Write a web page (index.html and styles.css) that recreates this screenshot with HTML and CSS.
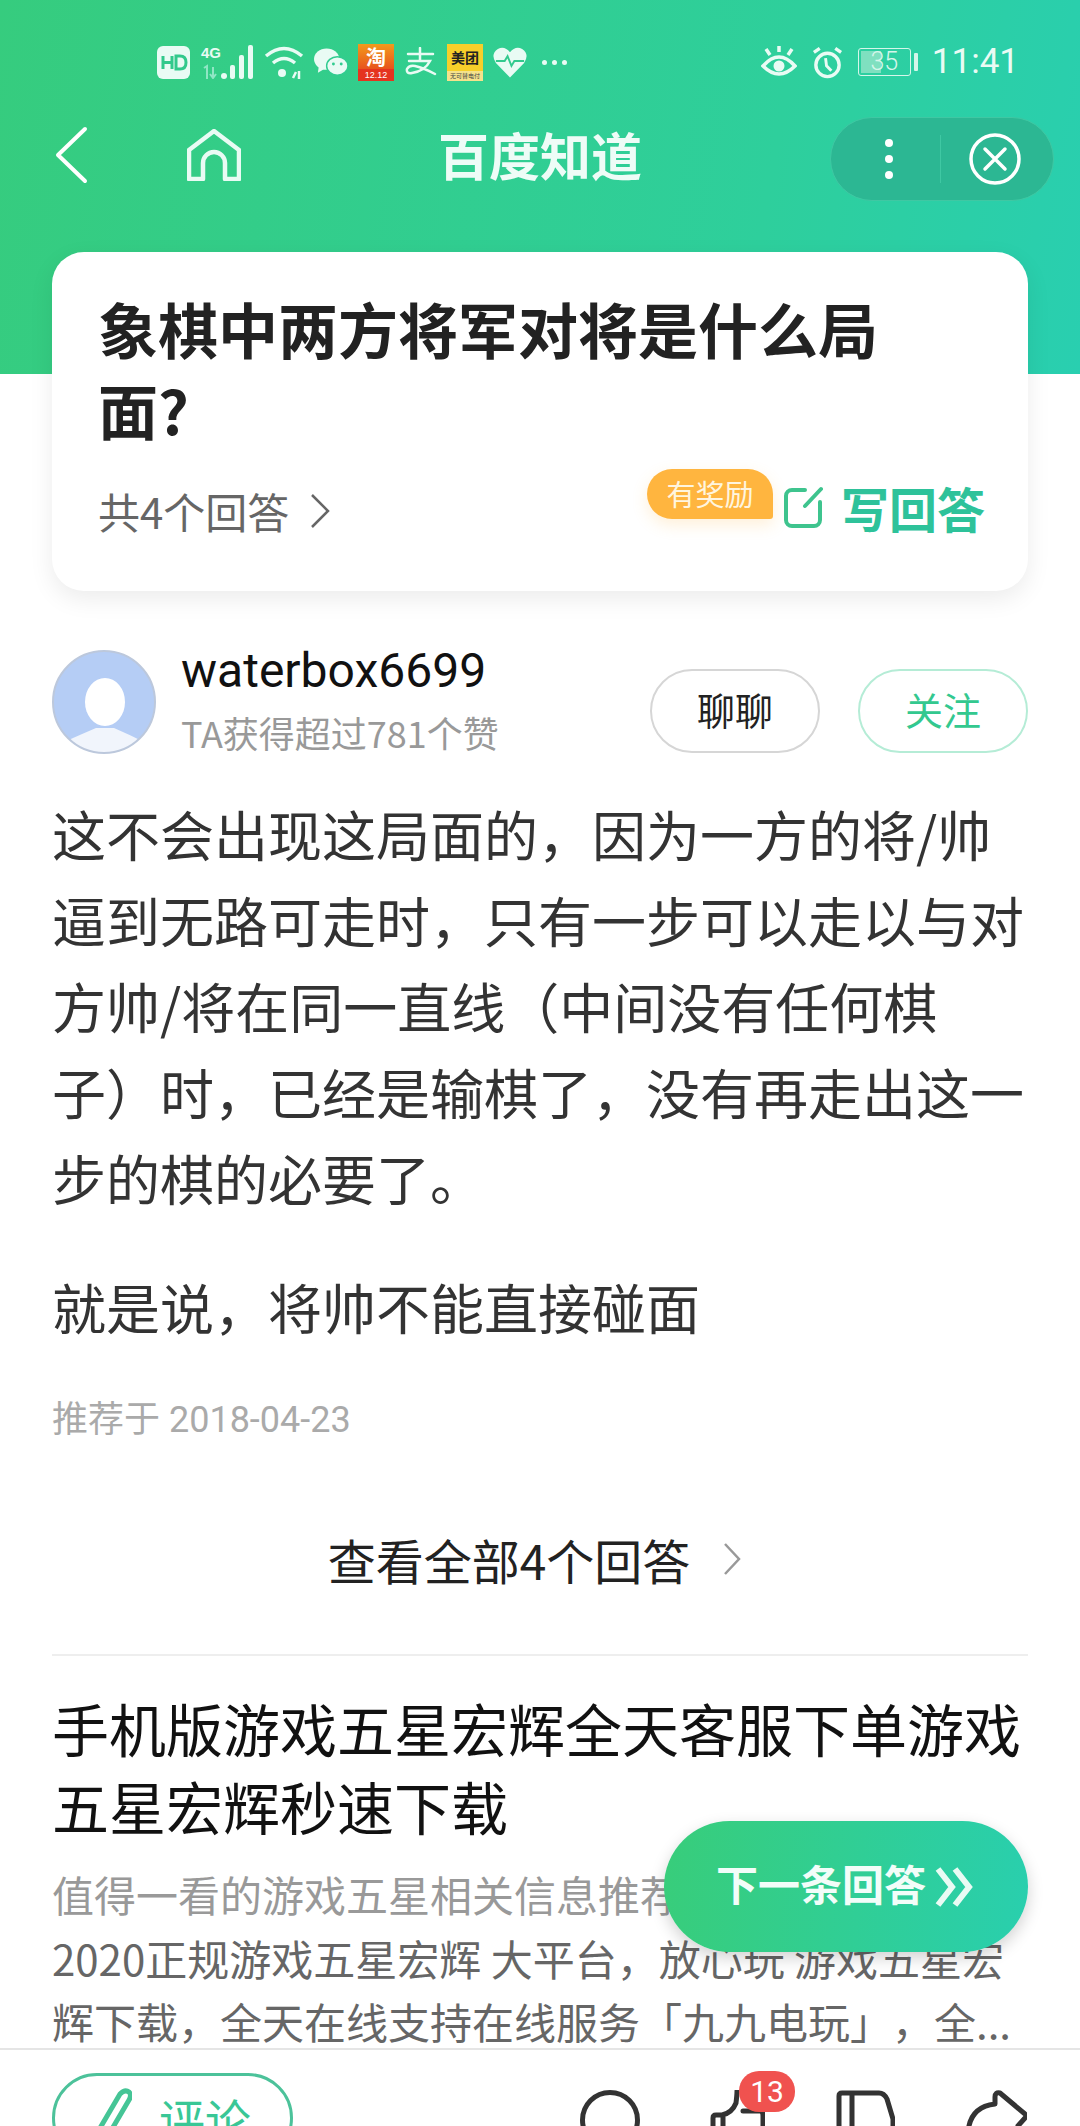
FILE: index.html
```html
<!DOCTYPE html>
<html lang="zh-CN">
<head>
    <meta charset="UTF-8">
    <meta name="viewport" content="width=device-width, initial-scale=1.0">
    <title>百度知道</title>
    <link rel="stylesheet" href="styles.css">
</head>
<body>
    <div class="page">
        <header class="top">
            <div class="status">
                <div class="status-left">
                    <svg class="st" width="33" height="33" viewBox="0 0 33 33"><rect width="33" height="33" rx="6" fill="#e9fbf4"/><path d="M6 10v13M15 10v13M6 16.500h9" stroke="#32c98c" stroke-width="3" fill="none"/><path d="M19 10h4q6 0 6 6.500t-6 6.500h-4z" stroke="#32c98c" stroke-width="3" fill="none"/></svg>
                    <div class="net">
                        <span class="net-4g">4G</span>
                        <svg class="net-bars" width="53" height="34" viewBox="0 0 53 34" fill="#e9fbf4"><path d="M3 23l3-2v13M12 22v10M9 29l3 4 3-4" fill="none" stroke="#8fe6c4" stroke-width="2"/><circle cx="23" cy="31" r="3"/><rect x="29" y="20" width="5" height="14" rx="2"/><rect x="38" y="10" width="5" height="24" rx="2"/><rect x="47" y="0" width="5" height="34" rx="2"/></svg>
                    </div>
                    <svg class="st" width="40" height="34" viewBox="0 0 40 34" fill="none" stroke="#e9fbf4" stroke-width="3.500"><path d="M2 11q18-15 36 0"/><path d="M9 18q11-9 22 0"/><circle cx="18" cy="28" r="4" fill="#e9fbf4" stroke="none"/><path d="M29 33l3-6M35 26v8" stroke-width="2.500"/></svg>
                    <svg class="st" width="34" height="30" viewBox="0 0 35 30" fill="#e9fbf4"><ellipse cx="13" cy="12" rx="13" ry="11"/><path d="M5 19l-1 7 7-4z"/><ellipse cx="24" cy="19" rx="11" ry="9.500" stroke="#31cc90" stroke-width="1.500"/><circle cx="20" cy="17" r="1.500" fill="#31cc90"/><circle cx="28" cy="17" r="1.500" fill="#31cc90"/></svg>
                    <div class="taobao"><span class="taobao-top">淘</span><span class="taobao-date">12.12</span></div>
                    <svg class="st" width="33" height="30" viewBox="0 0 33 30" fill="none" stroke="#e9fbf4" stroke-width="2.500" stroke-linecap="round"><path d="M4 7h25M16 1v12M5 14h21q-5 10-18 12q-6 1-5-4q2-4 8-3q9 2 20 8"/></svg>
                    <div class="meituan"><span class="meituan-top">美团</span><span class="meituan-sub">无可替电付</span></div>
                    <svg class="st" width="34" height="32" viewBox="0 0 35 32"><path d="M17.500 32L3 17Q-3 8 5 2.500 12-1 17.500 6 23-1 30 2.500 38 8 32 17z" fill="#e9fbf4"/><path d="M3 15h9l3-5 4 10 3-5h10" stroke="#32ca8e" stroke-width="2" fill="none"/></svg>
                    <span class="more-dots"><i></i><i></i><i></i></span>
                </div>
                <div class="status-right">
                    <svg width="36" height="32" viewBox="0 0 36 32" fill="none" stroke="#e9fbf4" stroke-width="3.500"><path d="M2 20q16-18 32 0q-16 16-32 0z"/><circle cx="18" cy="20" r="5.500" fill="#e9fbf4" stroke="none"/><path d="M18 0v6M5 3l4 6M31 3l-4 6"/></svg>
                    <svg width="33" height="33" viewBox="0 0 34 33" fill="none" stroke="#e9fbf4" stroke-width="3.500"><circle cx="17" cy="19" r="12"/><path d="M15 12l1 8 5 5" stroke-width="3"/><path d="M3 6l6-4M31 6l-6-4"/></svg>
                    <div class="battery">
                        <div class="battery-body"><span class="battery-fill"></span><span class="battery-num">35</span></div>
                        <span class="battery-tip"></span>
                    </div>
                    <span class="clock">11:41</span>
                </div>
            </div>
            <nav class="nav">
                <svg class="nav-back" width="34" height="58" viewBox="0 0 34 58" fill="none" stroke="#fff" stroke-width="4" stroke-linecap="round" stroke-linejoin="round"><path d="M31 3L4 29l27 26"/></svg>
                <svg class="nav-home" width="54" height="52" viewBox="0 0 54 52" fill="none" stroke="#e9fbf4" stroke-width="4.500" stroke-linejoin="round"><path d="M2 21L27 2l25 19v29H38V34a11 11 0 0 0-22 0v16H2z"/></svg>
                <h1 class="nav-title">百度知道</h1>
                <div class="capsule">
                    <span class="capsule-dots"><i></i><i></i><i></i></span>
                    <span class="capsule-line"></span>
                    <svg width="52" height="52" viewBox="0 0 52 52" fill="none" stroke="#fff" stroke-width="3.500"><circle cx="26" cy="26" r="24"/><path d="M16 16l20 20M36 16L16 36" stroke-linecap="round"/></svg>
                </div>
            </nav>
        </header>

        <main class="content">
            <section class="question">
                <h2 class="q-title">象棋中两方将军对将是什么局面?</h2>
                <div class="q-foot">
                    <span class="q-count">共4个回答
                        <svg width="22" height="36" viewBox="0 0 22 36" fill="none" stroke="#666" stroke-width="2.500"><path d="M3 2l16 16L3 34"/></svg>
                    </span>
                    <div class="q-write">
                        <span class="reward">有奖励</span>
                        <svg width="40" height="43" viewBox="0 0 40 43" fill="none" stroke="#3ec48e" stroke-width="4" stroke-linecap="round"><path d="M22 4H9a6 6 0 0 0-6 6v24a6 6 0 0 0 6 6h22a6 6 0 0 0 6-6V16"/><path d="M38 3L22 20"/></svg>
                        <span class="write-text">写回答</span>
                    </div>
                </div>
            </section>

            <section class="author">
                <svg class="avatar" width="104" height="104" viewBox="0 0 104 104"><defs><clipPath id="ava"><circle cx="52" cy="52" r="51"/></clipPath></defs><circle cx="52" cy="52" r="51" fill="#b5cdf5"/><g clip-path="url(#ava)"><path d="M12 92Q30 84 44 78H62Q76 84 92 92V104H12z" fill="#f1f5fc"/><ellipse cx="53" cy="52" rx="20" ry="24" fill="#fff"/></g><circle cx="52" cy="52" r="51" fill="none" stroke="#bcc8dc" stroke-width="2"/></svg>
                <div class="author-info">
                    <div class="author-name">waterbox6699</div>
                    <div class="author-sub">TA获得超过781个赞</div>
                </div>
                <button class="pill chat">聊聊</button>
                <button class="pill follow">关注</button>
            </section>

            <article class="answer">
                <p>这不会出现这局面的，因为一方的将/帅逼到无路可走时，只有一步可以走以与对方帅/将在同一直线（中间没有任何棋子）时，已经是输棋了，没有再走出这一步的棋的必要了。</p>
                <p>就是说，将帅不能直接碰面</p>
            </article>
            <div class="answer-date">推荐于 2018-04-23</div>

            <div class="see-all">查看全部4个回答
                <svg width="20" height="34" viewBox="0 0 20 34" fill="none" stroke="#999" stroke-width="2.500"><path d="M3 2l14 15L3 32"/></svg>
            </div>

            <section class="rec">
                <h3 class="rec-title">手机版游戏五星宏辉全天客服下单游戏五星宏辉秒速下载</h3>
                <p class="rec-text"><span class="rec-lead">值得一看的游戏五星相关信息推荐</span><br>2020正规游戏五星宏辉 大平台，放心玩 游戏五星宏辉下载，全天在线支持在线服务「九九电玩」，全...</p>
            </section>
        </main>

        <button class="next"><span class="next-text">下一条回答</span>
            <svg width="38" height="40" viewBox="0 0 38 40" fill="none" stroke="#e9fbf4" stroke-width="6"><path d="M3 2l14 18L3 38M20 2l14 18-14 18"/></svg>
        </button>

        <footer class="bottom">
            <div class="comment">
                <svg width="42" height="60" viewBox="0 0 42 60" fill="none" stroke="#45c596" stroke-width="5" stroke-linecap="round"><path d="M3 52L30 6q5-5 9-2 3 3 0 8L12 58"/></svg>
                <span>评论</span>
            </div>
            <div class="tools">
                <svg width="60" height="64" viewBox="0 0 60 64" fill="none" stroke="#333" stroke-width="5"><circle cx="30" cy="30" r="27.500"/></svg>
                <div class="like">
                    <svg width="55" height="64" viewBox="0 0 55 64" fill="none" stroke="#333" stroke-width="5" stroke-linecap="round"><path d="M3 44V28q0-3 3-3h6q10-2 14-12 1-8 1-12M13 25v19M33 21h17q3 0 3 5v18"/></svg>
                    <span class="badge">13</span>
                </div>
                <svg width="60" height="64" viewBox="0 0 60 64" fill="none" stroke="#333" stroke-width="5"><path d="M4 44V6q0-3 3-3h37q5 0 8 6l6 20v15M17 3v33"/></svg>
                <svg width="62" height="64" viewBox="0 0 62 64" fill="none" stroke="#333" stroke-width="5" stroke-linejoin="round"><path d="M3 44Q4 17 30 14V7q0-5 5-4l25 21q2 2 0 4l-8 9"/></svg>
            </div>
        </footer>
    </div>
</body>
</html>
```

FILE: styles.css
```css
* {
    box-sizing: border-box;
}
html, body {
    margin: 0;
    padding: 0;
}
body {
    background-color: #fff;
    font-family: "Noto Sans CJK SC", Roboto, sans-serif;
    color: #222;
    text-spacing-trim: space-all;
}
.page {
    position: relative;
    width: 1080px;
    height: 2126px;
    overflow: hidden;
    display: flex;
    flex-direction: column;
}

/* green header */
.top {
    height: 374px;
    flex-shrink: 0;
    background: linear-gradient(100deg, #36cc7e 0%, #2ecf9c 70%, #29cfb0 100%);
    padding-top: 42px;
}
.status {
    height: 40px;
    display: flex;
    justify-content: space-between;
    align-items: center;
    padding: 0 61px 0 157px;
}
.status-left, .status-right {
    display: flex;
    align-items: center;
}
.status-left .st {
    flex-shrink: 0;
}
.status-left {
    gap: 10px;
}
.status-right {
    gap: 14px;
}
.net {
    position: relative;
    width: 53px;
    height: 34px;
    margin-left: 1px;
}
.net-4g {
    position: absolute;
    left: 0;
    top: 0;
    font-family: "Liberation Sans", sans-serif;
    font-size: 15px;
    font-weight: bold;
    color: #e9fbf4;
    line-height: 15px;
}
.net-bars {
    display: block;
}
.taobao {
    width: 36px;
    height: 37px;
    background: linear-gradient(180deg, #f39a1c 0%, #e7511d 70%);
    display: flex;
    flex-direction: column;
    align-items: center;
}
.taobao-top {
    font-size: 20px;
    line-height: 25px;
    height: 25px;
    font-weight: bold;
    color: #fff;
}
.taobao-date {
    width: 100%;
    height: 12px;
    background-color: #e5341f;
    color: #fff;
    font-family: "Liberation Sans", sans-serif;
    font-size: 9px;
    line-height: 12px;
    text-align: center;
}
.meituan {
    width: 36px;
    height: 37px;
    background-color: #f7cf2a;
    display: flex;
    flex-direction: column;
    align-items: center;
}
.meituan-top {
    font-size: 14px;
    line-height: 27px;
    font-weight: bold;
    color: #222;
    white-space: nowrap;
}
.meituan-sub {
    width: 100%;
    height: 10px;
    background-color: #f5e28c;
    font-size: 6px;
    line-height: 10px;
    color: #444;
    text-align: center;
    white-space: nowrap;
    overflow: hidden;
}
.more-dots {
    display: flex;
    gap: 5px;
    margin-left: 5px;
}
.more-dots i {
    width: 5px;
    height: 5px;
    border-radius: 50%;
    background-color: #e9fbf4;
}
.battery {
    display: flex;
    align-items: center;
    gap: 3px;
}
.battery-body {
    position: relative;
    width: 53px;
    height: 28px;
    border: 1.5px solid #d5f6ea;
    border-radius: 3px;
}
.battery-fill {
    position: absolute;
    left: 2px;
    top: 2px;
    bottom: 2px;
    width: 20px;
    background-color: #7fe0c0;
}
.battery-num {
    position: absolute;
    inset: 0;
    text-align: center;
    font-family: Roboto, sans-serif;
    font-size: 25px;
    font-weight: 300;
    line-height: 25px;
    color: #d5f6ea;
}
.battery-tip {
    width: 4px;
    height: 18px;
    border-radius: 1px;
    background-color: #d5f6ea;
}
.clock {
    font-family: Roboto, sans-serif;
    font-size: 35px;
    line-height: 40px;
    color: #e9fbf4;
}
.nav {
    position: relative;
    height: 88px;
    margin-top: 32px;
    display: flex;
    align-items: center;
    padding: 0 26px 0 54px;
}
.nav-back, .nav-home {
    margin-bottom: 7px;
}
.nav-home {
    margin-left: 99px;
}
.nav-title {
    position: absolute;
    left: 0;
    right: 0;
    top: 8px;
    margin: 0;
    text-align: center;
    font-size: 51px;
    line-height: 64px;
    font-weight: bold;
    color: #eefcf7;
}
.capsule {
    position: relative;
    margin-left: auto;
    margin-top: 2px;
    width: 224px;
    height: 84px;
    border-radius: 42px;
    background-color: #2cb793;
    border: 1px solid #3fc8a3;
    display: flex;
    align-items: center;
    padding-left: 54px;
}
.capsule-dots {
    display: flex;
    flex-direction: column;
    gap: 8px;
}
.capsule-dots i {
    width: 8px;
    height: 8px;
    border-radius: 50%;
    background-color: #fff;
}
.capsule-line {
    width: 1px;
    height: 48px;
    background-color: #3fc8a3;
    margin-left: 47px;
    margin-right: 28px;
}

/* question card */
.content {
    flex: 1;
    padding: 0 52px;
    position: relative;
}
.question {
    position: absolute;
    left: 52px;
    top: -122px;
    width: 976px;
    height: 339px;
    padding: 35px 46px 0;
    border-radius: 32px;
    background-color: #fff;
    box-shadow: 0 8px 24px rgba(0, 0, 0, 0.08);
}
.q-title {
    margin: 0;
    max-width: 800px;
    font-size: 60px;
    line-height: 81px;
    font-weight: bold;
    color: #222;
}
.q-foot {
    display: flex;
    justify-content: space-between;
    align-items: center;
    margin-top: 28px;
}
.q-count {
    display: flex;
    align-items: center;
    gap: 20px;
    font-size: 42px;
    line-height: 60px;
    color: #666;
}
.q-write {
    position: relative;
    display: flex;
    align-items: center;
    gap: 18px;
    margin-right: -3px;
    margin-bottom: 8px;
}
.reward {
    position: absolute;
    right: 212px;
    top: -8px;
    width: 126px;
    height: 50px;
    border-radius: 25px 25px 3px 25px;
    background-color: #ffb53f;
    box-shadow: 0 6px 16px rgba(255, 181, 63, 0.2);
    color: #fff5df;
    font-size: 29px;
    line-height: 48px;
    text-align: center;
}
.write-text {
    font-size: 48px;
    line-height: 60px;
    font-weight: bold;
    color: #2ec29a;
}

/* answer */
.author {
    margin-top: 275px;
    display: flex;
    align-items: center;
    height: 106px;
}
.avatar {
    flex-shrink: 0;
}
.author-info {
    margin-left: 25px;
    flex: 1;
}
.author-name {
    font-family: Roboto, sans-serif;
    font-size: 48px;
    line-height: 60px;
    color: #111;
}
.author-sub {
    font-size: 36px;
    line-height: 62px;
    color: #999;
}
.pill {
    height: 84px;
    width: 170px;
    margin-top: 18px;
    border-radius: 42px;
    background-color: #fff;
    font-family: inherit;
    font-size: 38px;
    padding: 0 0 6px;
}
.chat {
    border: 2px solid #d6d6d6;
    color: #222;
}
.follow {
    margin-left: 38px;
    border: 2px solid #b5ecd6;
    color: #33c88f;
}
.answer {
    margin-top: 36px;
    padding-bottom: 3px;
    font-size: 54px;
    line-height: 86px;
    color: #333;
}
.answer p {
    margin: 0 0 43px;
}
.answer-date {
    font-family: Roboto, "Noto Sans CJK SC", sans-serif;
    font-size: 36px;
    line-height: 48px;
    color: #aaa;
}
.see-all {
    display: flex;
    justify-content: center;
    align-items: center;
    gap: 32px;
    margin-top: 85px;
    padding: 0 10px 65px 0;
    border-bottom: 2px solid #eee;
    font-size: 48px;
    line-height: 60px;
    color: #222;
}
.rec-title {
    margin: 0;
    padding-top: 32px;
    font-size: 57px;
    line-height: 78px;
    font-weight: normal;
    color: #111;
}
.rec-text {
    margin: 18px 0 0;
    font-size: 42px;
    line-height: 63.500px;
    color: #666;
}
.rec-lead {
    color: #999;
}

/* floating next button */
.next {
    position: absolute;
    left: 664px;
    top: 1821px;
    width: 364px;
    height: 131px;
    border: none;
    border-radius: 66px;
    background: linear-gradient(95deg, #38cd7a 0%, #29cfae 100%);
    box-shadow: 0 6px 16px rgba(0, 0, 0, 0.18);
    color: #f2fdf9;
    font-family: inherit;
    font-size: 42px;
    font-weight: bold;
    display: flex;
    align-items: center;
    justify-content: center;
    gap: 9px;
    padding: 0 3px 0 0;
}
.next-text {
    margin-bottom: 8px;
}

/* bottom bar */
.bottom {
    position: absolute;
    left: 0;
    right: 0;
    top: 2048px;
    height: 78px;
    border-top: 2px solid #e5e5e5;
    background-color: #fff;
    display: flex;
    align-items: flex-start;
    padding: 23px 53px 0 52px;
    justify-content: space-between;
    overflow: hidden;
}
.comment {
    width: 241px;
    height: 90px;
    border: 3px solid #4cc29a;
    border-radius: 45px;
    display: flex;
    align-items: center;
    gap: 27px;
    padding-left: 35px;
    font-size: 46px;
    color: #39c796;
    flex-shrink: 0;
}
.tools {
    display: flex;
    gap: 70px;
    align-items: flex-start;
    margin-top: 17px;
}
.like {
    position: relative;
    width: 55px;
}
.badge {
    position: absolute;
    left: 29px;
    top: -19px;
    width: 56px;
    height: 41px;
    border-radius: 20px;
    background-color: #f0524f;
    color: #fff;
    font-family: Roboto, sans-serif;
    font-size: 30px;
    line-height: 41px;
    text-align: center;
}
```
